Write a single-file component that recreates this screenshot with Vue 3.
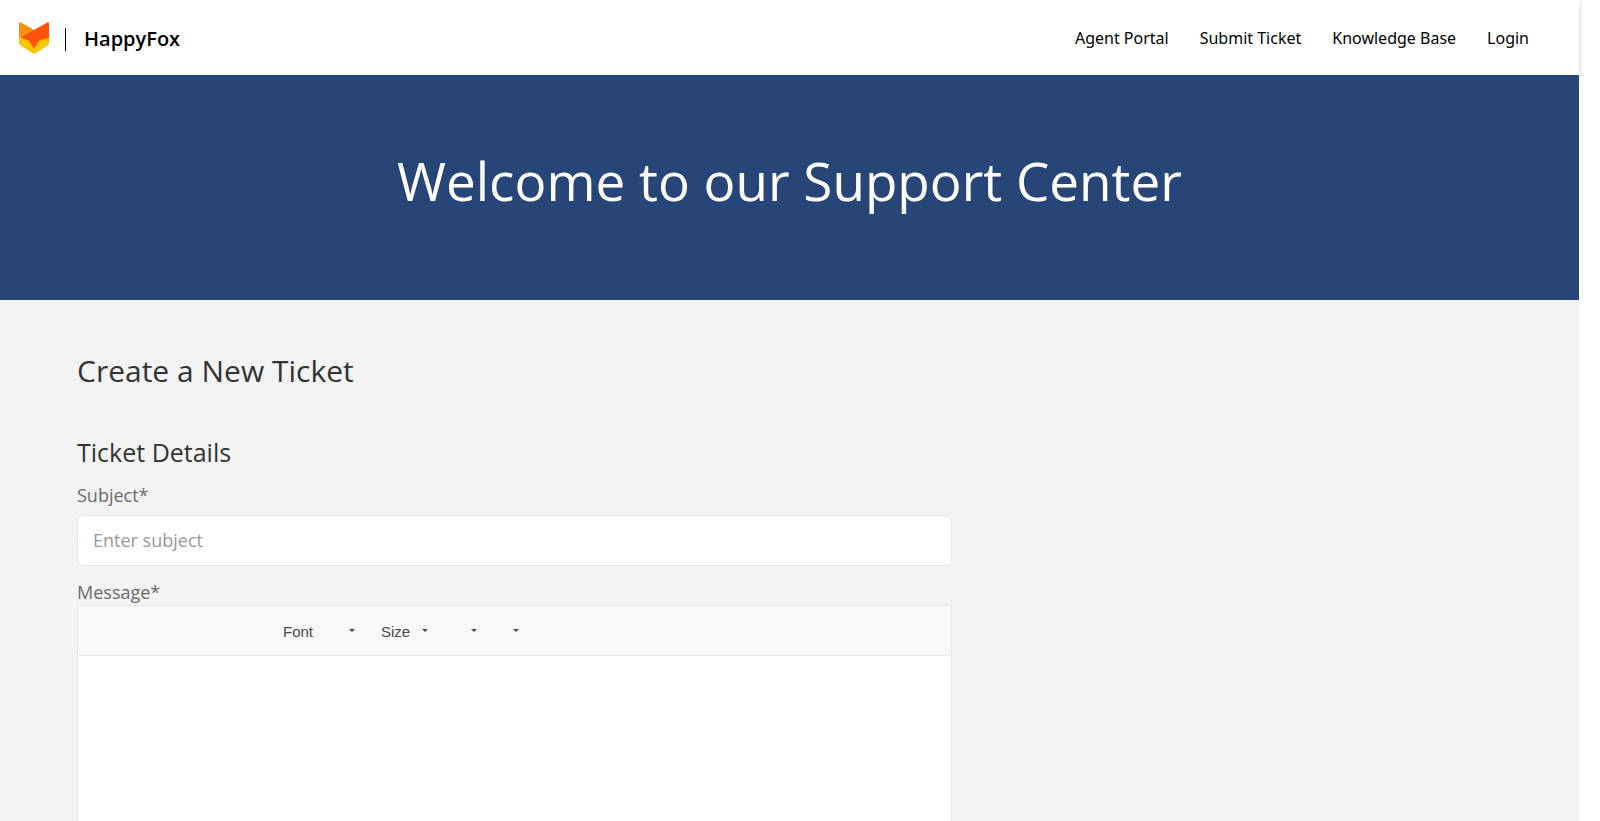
<script setup>
import { ref } from 'vue'

const links = ['Agent Portal', 'Submit Ticket', 'Knowledge Base', 'Login']
const subject = ref('')
const message = ref('')
const pickers = [
  { name: 'font', label: 'Font', title: 'Font family' },
  { name: 'size', label: 'Size', title: 'Font size' },
  { name: 'color', label: '', title: 'Text color' },
  { name: 'background', label: '', title: 'Background color' },
]
</script>

<template>
  <div class="page">
    <header class="topbar">
      <a class="brand" href="#">
        <svg class="logo" viewBox="0 0 30 32" aria-hidden="true">
          <path d="M0 16L15 17L30 16V21.500Q30 22.500 29 23L16 31.500Q15 32 14 31.500L1 23Q0 22.500 0 21.500Z" fill="#ffc400" />
          <path d="M0 1.500Q0 -.4 1.700 .5L18 9.500L0 16Z" fill="#ff8f0c" />
          <path d="M28.300 .5Q30 -.4 30 1.500V16L21.500 18Q20.500 18.200 20 19L15 26.500L10 19Q9.500 18.200 8.500 18L1.300 15.800Z" fill="#ff5405" />
        </svg>
        <span class="divider"></span>
        <span class="name">HappyFox</span>
      </a>
      <nav class="nav">
        <a v-for="link in links" :key="link" href="#">{{ link }}</a>
      </nav>
    </header>

    <section class="hero">
      <h1>Welcome to our Support Center</h1>
    </section>

    <main class="content">
      <form class="ticket" @submit.prevent>
        <h2>Create a New Ticket</h2>
        <h3>Ticket Details</h3>
        <label for="subject">Subject*</label>
        <input id="subject" v-model="subject" type="text" placeholder="Enter subject" />
        <label for="message">Message*</label>
        <div class="editor">
          <div class="toolbar">
            <span v-for="p in pickers" :key="p.name" class="picker" :class="p.name">
              <select :aria-label="p.title">
                <option>{{ p.label }}</option>
              </select>
              <svg class="caret" viewBox="0 0 6 3" aria-hidden="true"><path d="M0 0H6L3 3Z" /></svg>
            </span>
          </div>
          <textarea id="message" v-model="message"></textarea>
        </div>
      </form>
    </main>
  </div>
</template>

<style>
html {
  background: #fff;
}
body {
  height: 100vh;
  overflow: hidden;
}
</style>

<style scoped>
.page {
  box-sizing: border-box;
  min-height: 100vh;
  margin-right: 21px;
  background: #f3f3f3;
  color: #333;
  font-family: "Open Sans", sans-serif;
}
.topbar {
  display: flex;
  align-items: center;
  justify-content: space-between;
  height: 75px;
  padding: 0 50px 0 19px;
  background: #fff;
  box-shadow: 0 2px 6px rgba(0, 0, 0, 0.2);
}
.brand {
  display: flex;
  align-items: center;
  color: #000;
  text-decoration: none;
}
.logo {
  width: 30px;
  height: 32px;
}
.divider {
  width: 1px;
  height: 23px;
  margin: 4px 18px 0 16px;
  background: #000;
}
.name {
  font-size: 20px;
  font-weight: 600;
  line-height: 28px;
  padding-top: 2px;
}
.nav {
  display: flex;
  gap: 31px;
}
.nav a {
  color: #000;
  font-family: "Noto Sans", sans-serif;
  font-size: 16px;
  line-height: 24px;
  text-decoration: none;
}
.hero {
  position: relative;
  box-sizing: border-box;
  display: flex;
  align-items: center;
  justify-content: center;
  height: 225px;
  padding-bottom: 14px;
  background: #274576;
}
h1 {
  margin: 0;
  color: #fff;
  font-size: 53px;
  font-weight: 400;
  line-height: 74px;
}
.content {
  padding: 48px 77px 0;
}
.ticket {
  display: flex;
  flex-direction: column;
  max-width: 875px;
}
h2 {
  margin: 0 0 39px;
  font-size: 30px;
  font-weight: 400;
  line-height: 46px;
}
h3 {
  margin: 0 0 12px;
  font-size: 25px;
  font-weight: 400;
  line-height: 38px;
}
label {
  color: #6b6b6b;
  font-size: 18px;
  line-height: 24px;
}
input {
  box-sizing: border-box;
  width: 100%;
  height: 51px;
  margin: 8px 0 14px;
  padding: 0 15px 2px;
  border: 1px solid #e6e6e6;
  border-radius: 6px;
  background: #fff;
  color: #333;
  font: 18px "Open Sans", sans-serif;
}
input::placeholder {
  color: #999;
}
.editor {
  margin-top: 1px;
  border: 1px solid #e6e6e6;
  background: #fff;
}
.toolbar {
  display: flex;
  align-items: center;
  height: 49px;
  padding-left: 205px;
  border-bottom: 1px solid #e6e6e6;
  background: #f8f8f8;
}
.picker {
  display: flex;
  align-items: center;
}
.picker select {
  flex: 1;
  min-width: 0;
  padding: 2px 0 0;
  border: 0;
  background: none;
  color: #484848;
  font: 15px "Liberation Sans", sans-serif;
  appearance: none;
}
.font {
  width: 72px;
}
.size {
  width: 47px;
  margin-left: 26px;
}
.color,
.background {
  width: 22px;
}
.color {
  margin-left: 27px;
}
.background {
  margin-left: 20px;
}
.caret {
  width: 6px;
  height: 3px;
  fill: #484848;
}
textarea {
  display: block;
  box-sizing: border-box;
  width: 100%;
  height: 300px;
  padding: 15px;
  border: 0;
  resize: none;
  font: 16px "Open Sans", sans-serif;
}
</style>
